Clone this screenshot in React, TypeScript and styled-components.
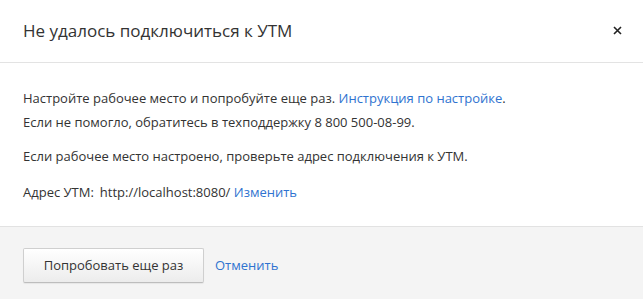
import React from 'react';
import styled, { createGlobalStyle } from 'styled-components';

const GlobalStyle = createGlobalStyle`
  html, body {
    margin: 0;
    padding: 0;
    background: #ffffff;
  }
  body {
    font-family: 'Open Sans', 'Liberation Sans', sans-serif;
    color: #333333;
  }
`;

const Dialog = styled.div`
  width: 643px;
  height: 299px;
  display: flex;
  flex-direction: column;
  background: #ffffff;
`;

const Header = styled.div`
  height: 63px;
  box-sizing: border-box;
  display: flex;
  align-items: center;
  justify-content: space-between;
  padding: 0 18px 2px 23px;
  border-bottom: 1px solid #e3e3e3;
`;

const Title = styled.div`
  font-size: 17px;
  color: #333333;
`;

const Close = styled.button`
  border: none;
  background: transparent;
  padding: 0;
  width: 16px;
  height: 16px;
  display: flex;
  align-items: center;
  justify-content: center;
  cursor: pointer;
`;

const Body = styled.div`
  flex: 1;
  padding: 23px 23px 0 23px;
  font-size: 13px;
  line-height: 24px;
`;

const Paragraph = styled.p<{ gap?: number }>`
  margin: 0 0 ${({ gap }) => gap ?? 12}px 0;
`;

const Link = styled.a`
  color: #2f73d0;
  text-decoration: none;
  cursor: pointer;
`;

const Url = styled.span`
  margin-left: 6px;
`;

const Footer = styled.div`
  height: 73px;
  box-sizing: border-box;
  background: #f4f4f4;
  border-top: 1px solid #e2e2e2;
  display: flex;
  align-items: center;
  padding: 4px 23px 0 23px;
  gap: 11px;
`;

const Button = styled.button`
  height: 35px;
  width: 181px;
  padding: 0;
  white-space: nowrap;
  font-family: inherit;
  font-size: 13px;
  color: #333333;
  border: 1px solid #cfcfcf;
  border-bottom-color: #bdbdbd;
  border-radius: 2px;
  background: linear-gradient(#ffffff, #ececec);
  box-shadow: 0 1px 1px rgba(0, 0, 0, 0.06);
  cursor: pointer;
`;

const FooterLink = styled(Link)`
  font-size: 13px;
`;

export default function App() {
  return (
    <>
      <GlobalStyle />
      <Dialog>
        <Header>
          <Title>Не удалось подключиться к УТМ</Title>
          <Close aria-label="Закрыть">
            <svg width="9" height="9" viewBox="0 0 9 9">
              <path d="M1 1 L8 8 M8 1 L1 8" stroke="#222" strokeWidth="1.6" />
            </svg>
          </Close>
        </Header>
        <Body>
          <Paragraph gap={10}>
            Настройте рабочее место и попробуйте еще раз. <Link>Инструкция по настройке</Link>.
            <br />
            Если не помогло, обратитесь в техподдержку 8 800 500-08-99.
          </Paragraph>
          <Paragraph>Если рабочее место настроено, проверьте адрес подключения к УТМ.</Paragraph>
          <Paragraph>
            Адрес УТМ:<Url>http://localhost:8080/</Url> <Link>Изменить</Link>
          </Paragraph>
        </Body>
        <Footer>
          <Button>Попробовать еще раз</Button>
          <FooterLink>Отменить</FooterLink>
        </Footer>
      </Dialog>
    </>
  );
}
